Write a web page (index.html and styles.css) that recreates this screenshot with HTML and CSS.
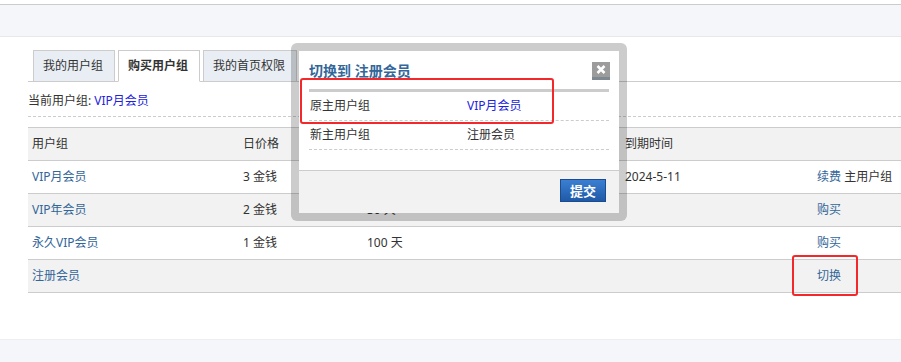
FILE: index.html
```html
<!DOCTYPE html>
<html lang="zh-CN">
  <head>
    <meta charset="UTF-8" />
    <title>购买用户组</title>
    <link rel="stylesheet" href="styles.css">
  </head>
  <body>
    <div class="topbar"></div>

    <div class="main">
      <ul class="tabs">
        <li><a href="#">我的用户组</a></li>
        <li class="active"><a href="#">购买用户组</a></li>
        <li class="wide"><a href="#">我的首页权限</a></li>
      </ul>

      <p class="current">当前用户组: <a href="#">VIP月会员</a></p>

      <table class="groups">
        <colgroup>
          <col style="width: 211px" />
          <col style="width: 124px" />
          <col style="width: 258px" />
          <col style="width: 192px" />
          <col />
        </colgroup>
        <tr class="head">
          <td>用户组</td>
          <td>日价格</td>
          <td>有效期</td>
          <td>到期时间</td>
          <td></td>
        </tr>
        <tr>
          <td><a href="#">VIP月会员</a></td>
          <td>3 金钱</td>
          <td>30 天</td>
          <td>2024-5-11</td>
          <td><a href="#">续费</a> 主用户组</td>
        </tr>
        <tr class="alt">
          <td><a href="#">VIP年会员</a></td>
          <td>2 金钱</td>
          <td>30 天</td>
          <td></td>
          <td><a href="#">购买</a></td>
        </tr>
        <tr>
          <td><a href="#">永久VIP会员</a></td>
          <td>1 金钱</td>
          <td>100 天</td>
          <td></td>
          <td><a href="#">购买</a></td>
        </tr>
        <tr class="alt">
          <td><a href="#">注册会员</a></td>
          <td></td>
          <td></td>
          <td></td>
          <td><a href="#">切换</a></td>
        </tr>
      </table>
    </div>

    <div class="bottombar"></div>

    <!-- switch dialog -->
    <div class="dialog">
      <div class="dialog-inner">
        <div class="dialog-title">
          <h3>切换到 注册会员</h3>
          <a class="close" href="#" title="关闭">
            <svg width="18" height="15" viewBox="0 0 18 15">
              <path d="M5.5 4 L12.5 11 M12.5 4 L5.5 11" stroke="#fff" stroke-width="2.6" />
            </svg>
          </a>
        </div>
        <div class="dialog-body">
          <div class="dialog-row">
            <span class="label">原主用户组</span>
            <span class="value blue">VIP月会员</span>
          </div>
          <div class="dialog-row">
            <span class="label">新主用户组</span>
            <span class="value">注册会员</span>
          </div>
        </div>
        <div class="dialog-foot">
          <button class="submit-btn">提交</button>
        </div>
      </div>
    </div>

    <div class="mark mark-dialog"></div>
    <div class="mark mark-switch"></div>
  </body>
</html>
```

FILE: styles.css
```css
* {
  margin: 0;
  padding: 0;
  box-sizing: border-box;
}
body {
  font-family: "Noto Sans", "Noto Sans CJK SC", sans-serif;
  font-size: 12px;
  color: #333;
  background: #fff;
  position: relative;
  width: 901px;
  height: 362px;
  overflow: hidden;
}
a {
  color: #369;
  text-decoration: none;
}

.topbar {
  margin-top: 4px;
  height: 33px;
  border-top: 1px solid #ccc;
  border-bottom: 1px solid #e8e8e8;
  background: #f5f6f9;
}

.main {
  padding: 13px 0 0 28px;
}

/* Tabs */
.tabs {
  list-style: none;
  display: flex;
  padding-left: 5px;
  border-bottom: 1px solid #ccc;
  height: 32px;
}
.tabs li {
  flex: none;
  width: 82px;
  margin-right: 3px;
  height: 32px;
  border: 1px solid #ccc;
  background: #e8eef4;
}
.tabs li.wide {
  width: 94px;
}
.tabs li a {
  display: block;
  padding-left: 9px;
  line-height: 30px;
  color: #333;
  white-space: nowrap;
}
.tabs li.active {
  background: #fff;
  border-bottom-color: #fff;
}
.tabs li.active a {
  font-weight: bold;
}

.current {
  padding: 10px 0 6px;
  line-height: 18px;
  border-bottom: 1px dashed #ccc;
}
.current a {
  color: #22d;
}

/* Group table */
.groups {
  margin-top: 10px;
  width: 873px;
  border-collapse: collapse;
  table-layout: fixed;
}
.groups td {
  padding: 7px 4px;
  line-height: 18px;
  border-top: 1px solid #ccc;
  border-bottom: 1px solid #ccc;
  white-space: nowrap;
}
.groups tr.head,
.groups tr.alt {
  background: #f2f2f2;
}

.bottombar {
  margin-top: 46px;
  height: 30px;
  border-top: 1px solid #eceef2;
  background: #f5f6f9;
}

/* Dialog */
.dialog {
  position: absolute;
  left: 291px;
  top: 43px;
  width: 336px;
  height: 178px;
  padding: 8px;
  border-radius: 6px;
  background: rgba(0, 0, 0, 0.2);
}
.dialog-inner {
  background: #fff;
  height: 100%;
  display: flex;
  flex-direction: column;
}
.dialog-title {
  margin: 0 10px;
  padding: 10px 0 8px;
  border-bottom: 3px solid #ccc;
  display: flex;
  justify-content: space-between;
  align-items: flex-start;
}
.dialog-title h3 {
  font-size: 14px;
  line-height: 20px;
  color: #369;
}
.close {
  display: block;
  width: 18px;
  height: 18px;
  margin: 1px -1px 0 0;
  background: #9c9c9c;
  border-bottom: 3px solid #7d8891;
}
.close svg {
  display: block;
}
.dialog-body {
  margin: 0 10px;
  padding-bottom: 20px;
}
.dialog-row {
  display: flex;
  line-height: 28px;
  border-bottom: 1px dashed #ccc;
  padding-left: 1px;
}
.dialog-row .label {
  width: 157px;
}
.dialog-row .blue {
  color: #22d;
}
.dialog-foot {
  flex: 1;
  border-top: 1px solid #ccc;
  background: #f2f2f2;
  display: flex;
  justify-content: flex-end;
  align-items: flex-start;
  padding: 8px 13px 0 0;
}
.submit-btn {
  width: 46px;
  height: 23px;
  border: 1px solid #1a4c8f;
  background: linear-gradient(#3b7fd2, #1f5aa7);
  color: #fff;
  font-family: inherit;
  font-size: 13px;
  font-weight: bold;
  line-height: 20px;
  cursor: pointer;
}

/* red highlight marks */
.mark {
  position: absolute;
  border: 2px solid #f3282a;
  border-radius: 3px;
}
.mark-dialog {
  left: 300px;
  top: 78px;
  width: 254px;
  height: 46px;
}
.mark-switch {
  left: 792px;
  top: 255px;
  width: 66px;
  height: 41px;
}
```
